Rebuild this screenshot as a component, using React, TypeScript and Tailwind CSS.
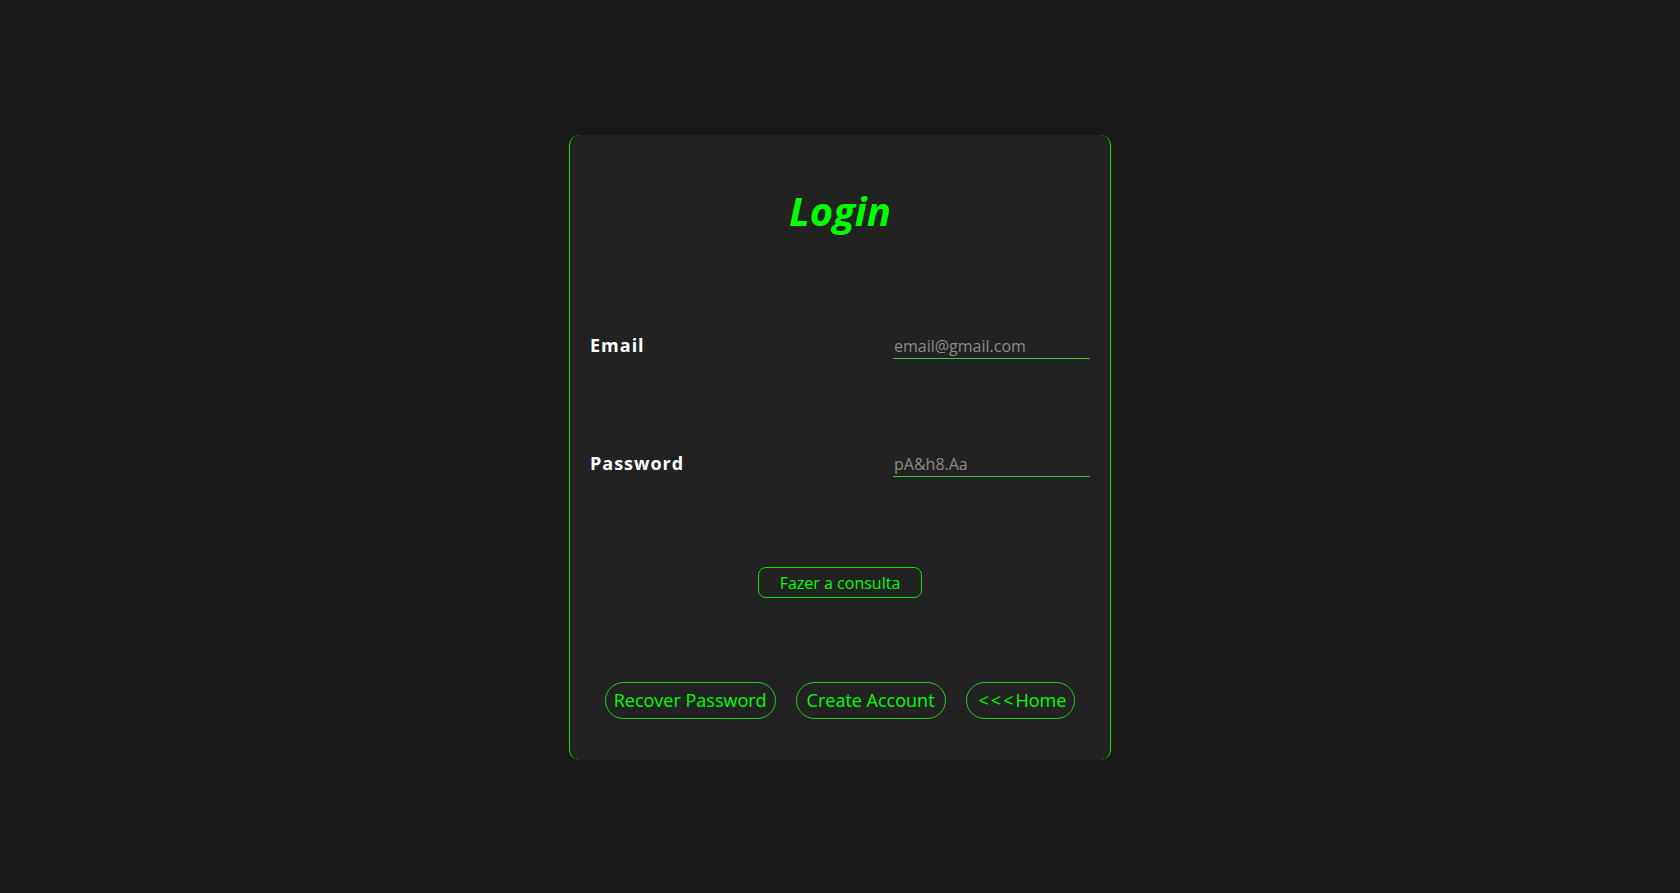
import React from "react";

export default function App() {
  return (
    <div
      className="min-h-[893px] w-full bg-[#181818] pt-[135px]"
      style={{ fontFamily: '"Open Sans", "Noto Sans", sans-serif' }}
    >
      <div className="mx-auto flex h-[625px] w-[542px] flex-col rounded-[10px] border-x border-[#00e600] bg-[#222222] px-[20px]">
        <h1 className="pt-[48px] text-center text-[40px] font-bold italic leading-[56px] text-[#00ff00]">
          Login
        </h1>

        <div className="mt-[93px] flex items-baseline justify-between">
          <label className="text-[18px] font-bold tracking-[1px] text-white">Email</label>
          <input
            type="email"
            placeholder="email@gmail.com"
            className="h-[24px] w-[197px] border-b border-[#32cd32] bg-transparent px-[1px] text-[16px] text-white placeholder-[#8c8c8c] outline-none"
          />
        </div>

        <div className="mt-[91px] flex items-baseline justify-between">
          <label className="text-[18px] font-bold tracking-[1px] text-white">Password</label>
          <input
            type="password"
            placeholder="pA&h8.Aa"
            className="h-[24px] w-[197px] border-b border-[#32cd32] bg-transparent px-[1px] text-[16px] text-white placeholder-[#8c8c8c] outline-none"
          />
        </div>

        <div className="mt-[90px] flex justify-center">
          <button className="h-[31px] w-[164px] rounded-[8px] border border-[#00e600] text-[16px] text-[#00ff00]">
            Fazer a consulta
          </button>
        </div>

        <div className="mt-[84px] flex justify-center gap-[20px]">
          <button className="h-[37px] rounded-full border border-[#1fcf1f] px-[8px] text-[18px] text-[#00ff00]">
            Recover Password
          </button>
          <button className="h-[37px] rounded-full border border-[#1fcf1f] px-[10px] text-[18px] text-[#00ff00]">
            Create Account
          </button>
          <button className="h-[37px] rounded-full border border-[#1fcf1f] pl-[12px] pr-[8px] text-[18px] text-[#00ff00]">
            <span className="tracking-[2px]">&lt;&lt;&lt;</span>Home
          </button>
        </div>
      </div>
    </div>
  );
}
